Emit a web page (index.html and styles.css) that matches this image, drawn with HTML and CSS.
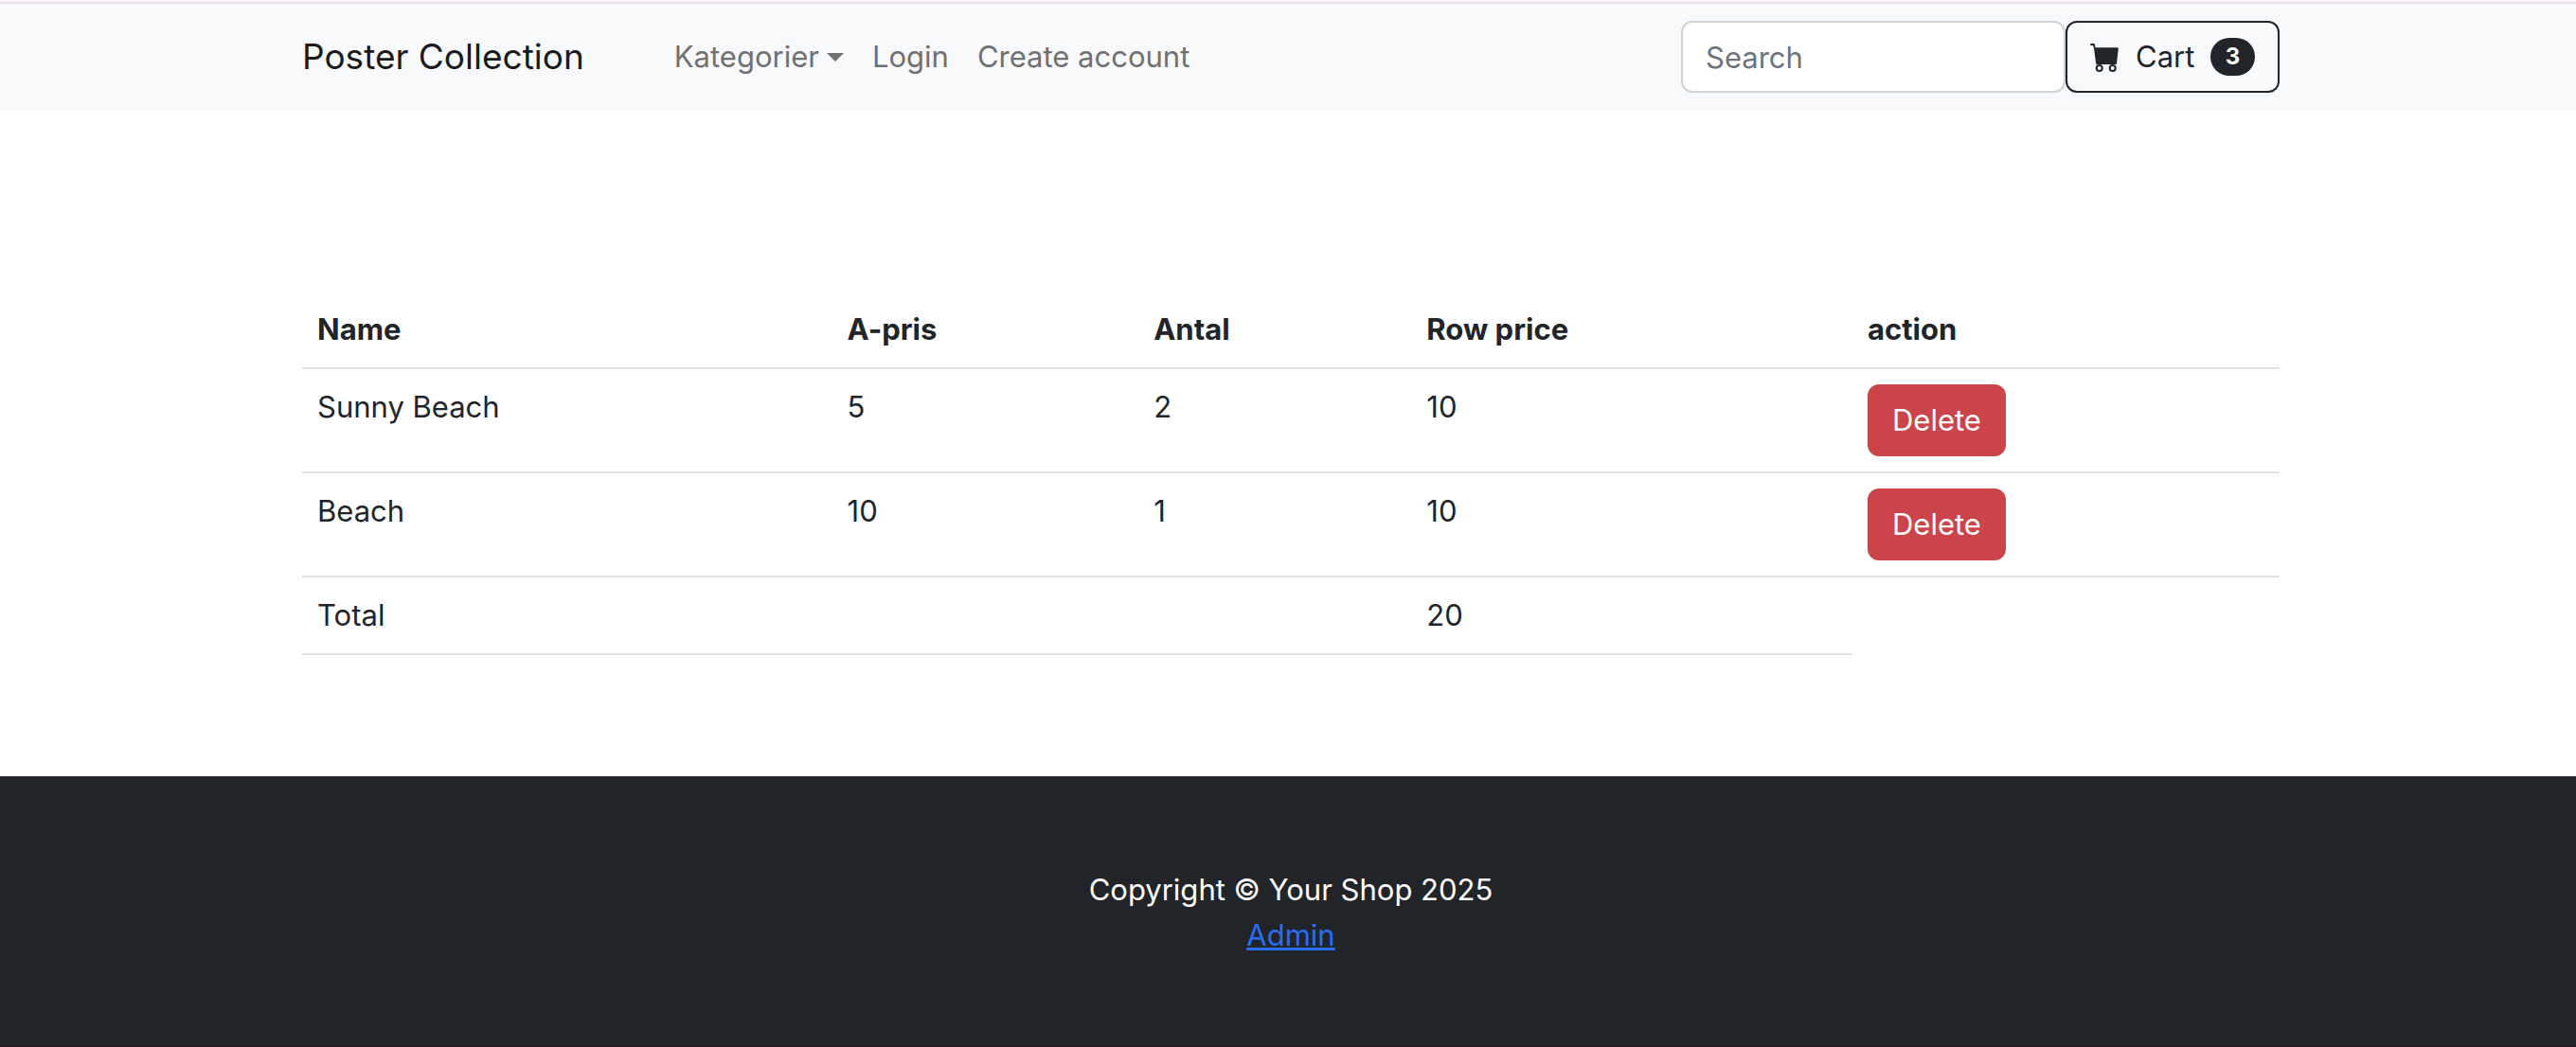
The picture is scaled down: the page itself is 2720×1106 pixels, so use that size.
FILE: index.html
```html
<!DOCTYPE html>
<html lang="en">
<head>
  <meta charset="utf-8">
  <meta name="viewport" content="width=device-width, initial-scale=1">
  <title>Poster Collection</title>
  <link rel="stylesheet" href="styles.css">
</head>
<body>
  <header class="site-header">
    <nav class="container navbar">
      <a class="brand" href="#">Poster Collection</a>
      <ul class="nav-list">
        <li><a class="nav-link dropdown-toggle" href="#">Kategorier</a></li>
        <li><a class="nav-link" href="#">Login</a></li>
        <li><a class="nav-link" href="#">Create account</a></li>
      </ul>
      <form class="search-form">
        <input class="search-input" type="search" placeholder="Search" aria-label="Search">
        <button class="cart-button" type="button">
          <svg class="cart-icon" viewBox="0 0 32 32" aria-hidden="true">
            <path fill="currentColor" d="M1 2H3.800Q4.600 2 4.800 2.800L5.600 6.300H29Q29.900 6.300 29.800 7.200L28 23.200Q27.900 24 27.100 24H7.200Q6.400 24 6.200 23.200L4 7.300L3.100 4H1Q0 4 0 3Q0 2 1 2Z"/>
            <circle cx="9.700" cy="28" r="3" fill="none" stroke="currentColor" stroke-width="2"/>
            <circle cx="23.700" cy="28" r="3" fill="none" stroke="currentColor" stroke-width="2"/>
          </svg>
          <span>Cart</span>
          <span class="badge">3</span>
        </button>
      </form>
    </nav>
  </header>

  <main class="container cart">
    <table class="cart-table">
      <colgroup>
        <col class="col-name">
        <col class="col-price">
        <col class="col-count">
        <col class="col-row-price">
        <col class="col-action">
      </colgroup>
      <thead>
        <tr>
          <th scope="col">Name</th>
          <th scope="col">A-pris</th>
          <th scope="col">Antal</th>
          <th scope="col">Row price</th>
          <th scope="col">action</th>
        </tr>
      </thead>
      <tbody>
        <tr>
          <td>Sunny Beach</td>
          <td>5</td>
          <td>2</td>
          <td>10</td>
          <td><button class="delete-button" type="button">Delete</button></td>
        </tr>
        <tr>
          <td>Beach</td>
          <td>10</td>
          <td>1</td>
          <td>10</td>
          <td><button class="delete-button" type="button">Delete</button></td>
        </tr>
        <tr>
          <td>Total</td>
          <td></td>
          <td></td>
          <td>20</td>
        </tr>
      </tbody>
    </table>
  </main>

  <footer class="site-footer">
    <div class="container footer-content">
      <p class="copyright">Copyright © Your Shop 2025</p>
      <a class="admin-link" href="#">Admin</a>
    </div>
  </footer>
</body>
</html>
```

FILE: styles.css
```css
*,
*::before,
*::after {
  box-sizing: border-box;
}

body {
  display: flex;
  flex-direction: column;
  min-height: 100vh;
  margin: 0;
  background: #fff;
  color: #212529;
  font-family: Inter, "Liberation Sans", sans-serif;
  font-size: 31px;
  line-height: 48px;
}

button,
input {
  font: inherit;
}

.container {
  width: 100%;
  max-width: 2286px;
  margin: 0 auto;
  padding: 0 96px 0 102px;
}

/* Header */
.site-header {
  border-top: 2px solid #fdf5fa;
  background: #f8f9fb;
}

.site-header::before {
  content: "";
  display: block;
  height: 2px;
  background: #ebdfe7;
}

.navbar {
  display: flex;
  align-items: center;
  padding-top: 18px;
  padding-bottom: 18px;
}

.brand {
  margin-right: 80px;
  color: #1a1b1c;
  font-size: 37px;
  text-decoration: none;
  white-space: nowrap;
}

.nav-list {
  display: flex;
  flex: 1;
  margin: 0;
  padding: 0;
  list-style: none;
}

.nav-link {
  display: flex;
  align-items: center;
  padding: 0 15px;
  color: #707172;
  text-decoration: none;
  white-space: nowrap;
}

.dropdown-toggle::after {
  content: "";
  margin-left: 8px;
  border-top: 9px solid;
  border-right: 9px solid transparent;
  border-left: 9px solid transparent;
}

.search-form {
  display: flex;
}

.search-input {
  width: 406px;
  height: 76px;
  padding: 12px 24px;
  border: 2px solid #ced4da;
  border-radius: 12px;
  background: #fff;
  color: #212529;
}

.search-input::placeholder {
  color: #6c757d;
  opacity: 1;
}

.cart-button {
  display: flex;
  align-items: center;
  min-width: 226px;
  height: 76px;
  padding: 0 24px;
  border: 2px solid #212529;
  border-radius: 12px;
  background: transparent;
  color: #212529;
}

.cart-icon {
  width: 32px;
  height: 32px;
  margin-right: 16px;
}

.badge {
  min-width: 47px;
  margin-left: auto;
  padding: 0 15px;
  border-radius: 20px;
  background: #212529;
  color: #fff;
  font-size: 24px;
  font-weight: 700;
  line-height: 40px;
}

/* Cart */
.cart {
  padding-top: 192px;
  padding-bottom: 128px;
}

.cart-table {
  width: 100%;
  border-collapse: separate;
  border-spacing: 0;
  table-layout: fixed;
}

.col-name {
  width: 26.8%;
}

.col-price {
  width: 15.5%;
}

.col-count {
  width: 13.8%;
}

.col-row-price {
  width: 22.3%;
}

.col-action {
  width: 21.6%;
}

.cart-table th,
.cart-table td {
  padding: 16px;
  border-bottom: 2px solid #dee2e6;
  text-align: left;
  vertical-align: top;
}

.delete-button {
  display: block;
  height: 76px;
  padding: 0 26px;
  border: 0;
  border-radius: 12px;
  background: #cb444a;
  color: #fff;
}

/* Footer */
.site-footer {
  flex: 1;
  padding: 96px 0 92px;
  border-bottom: 2px solid #2a1a24;
  background: #212529;
  color: #fff;
}

.footer-content {
  text-align: center;
}

.copyright {
  margin: 0;
}

.admin-link {
  display: block;
  width: fit-content;
  margin: 0 auto;
  color: #2a6df5;
  text-decoration-thickness: 3px;
}
```
